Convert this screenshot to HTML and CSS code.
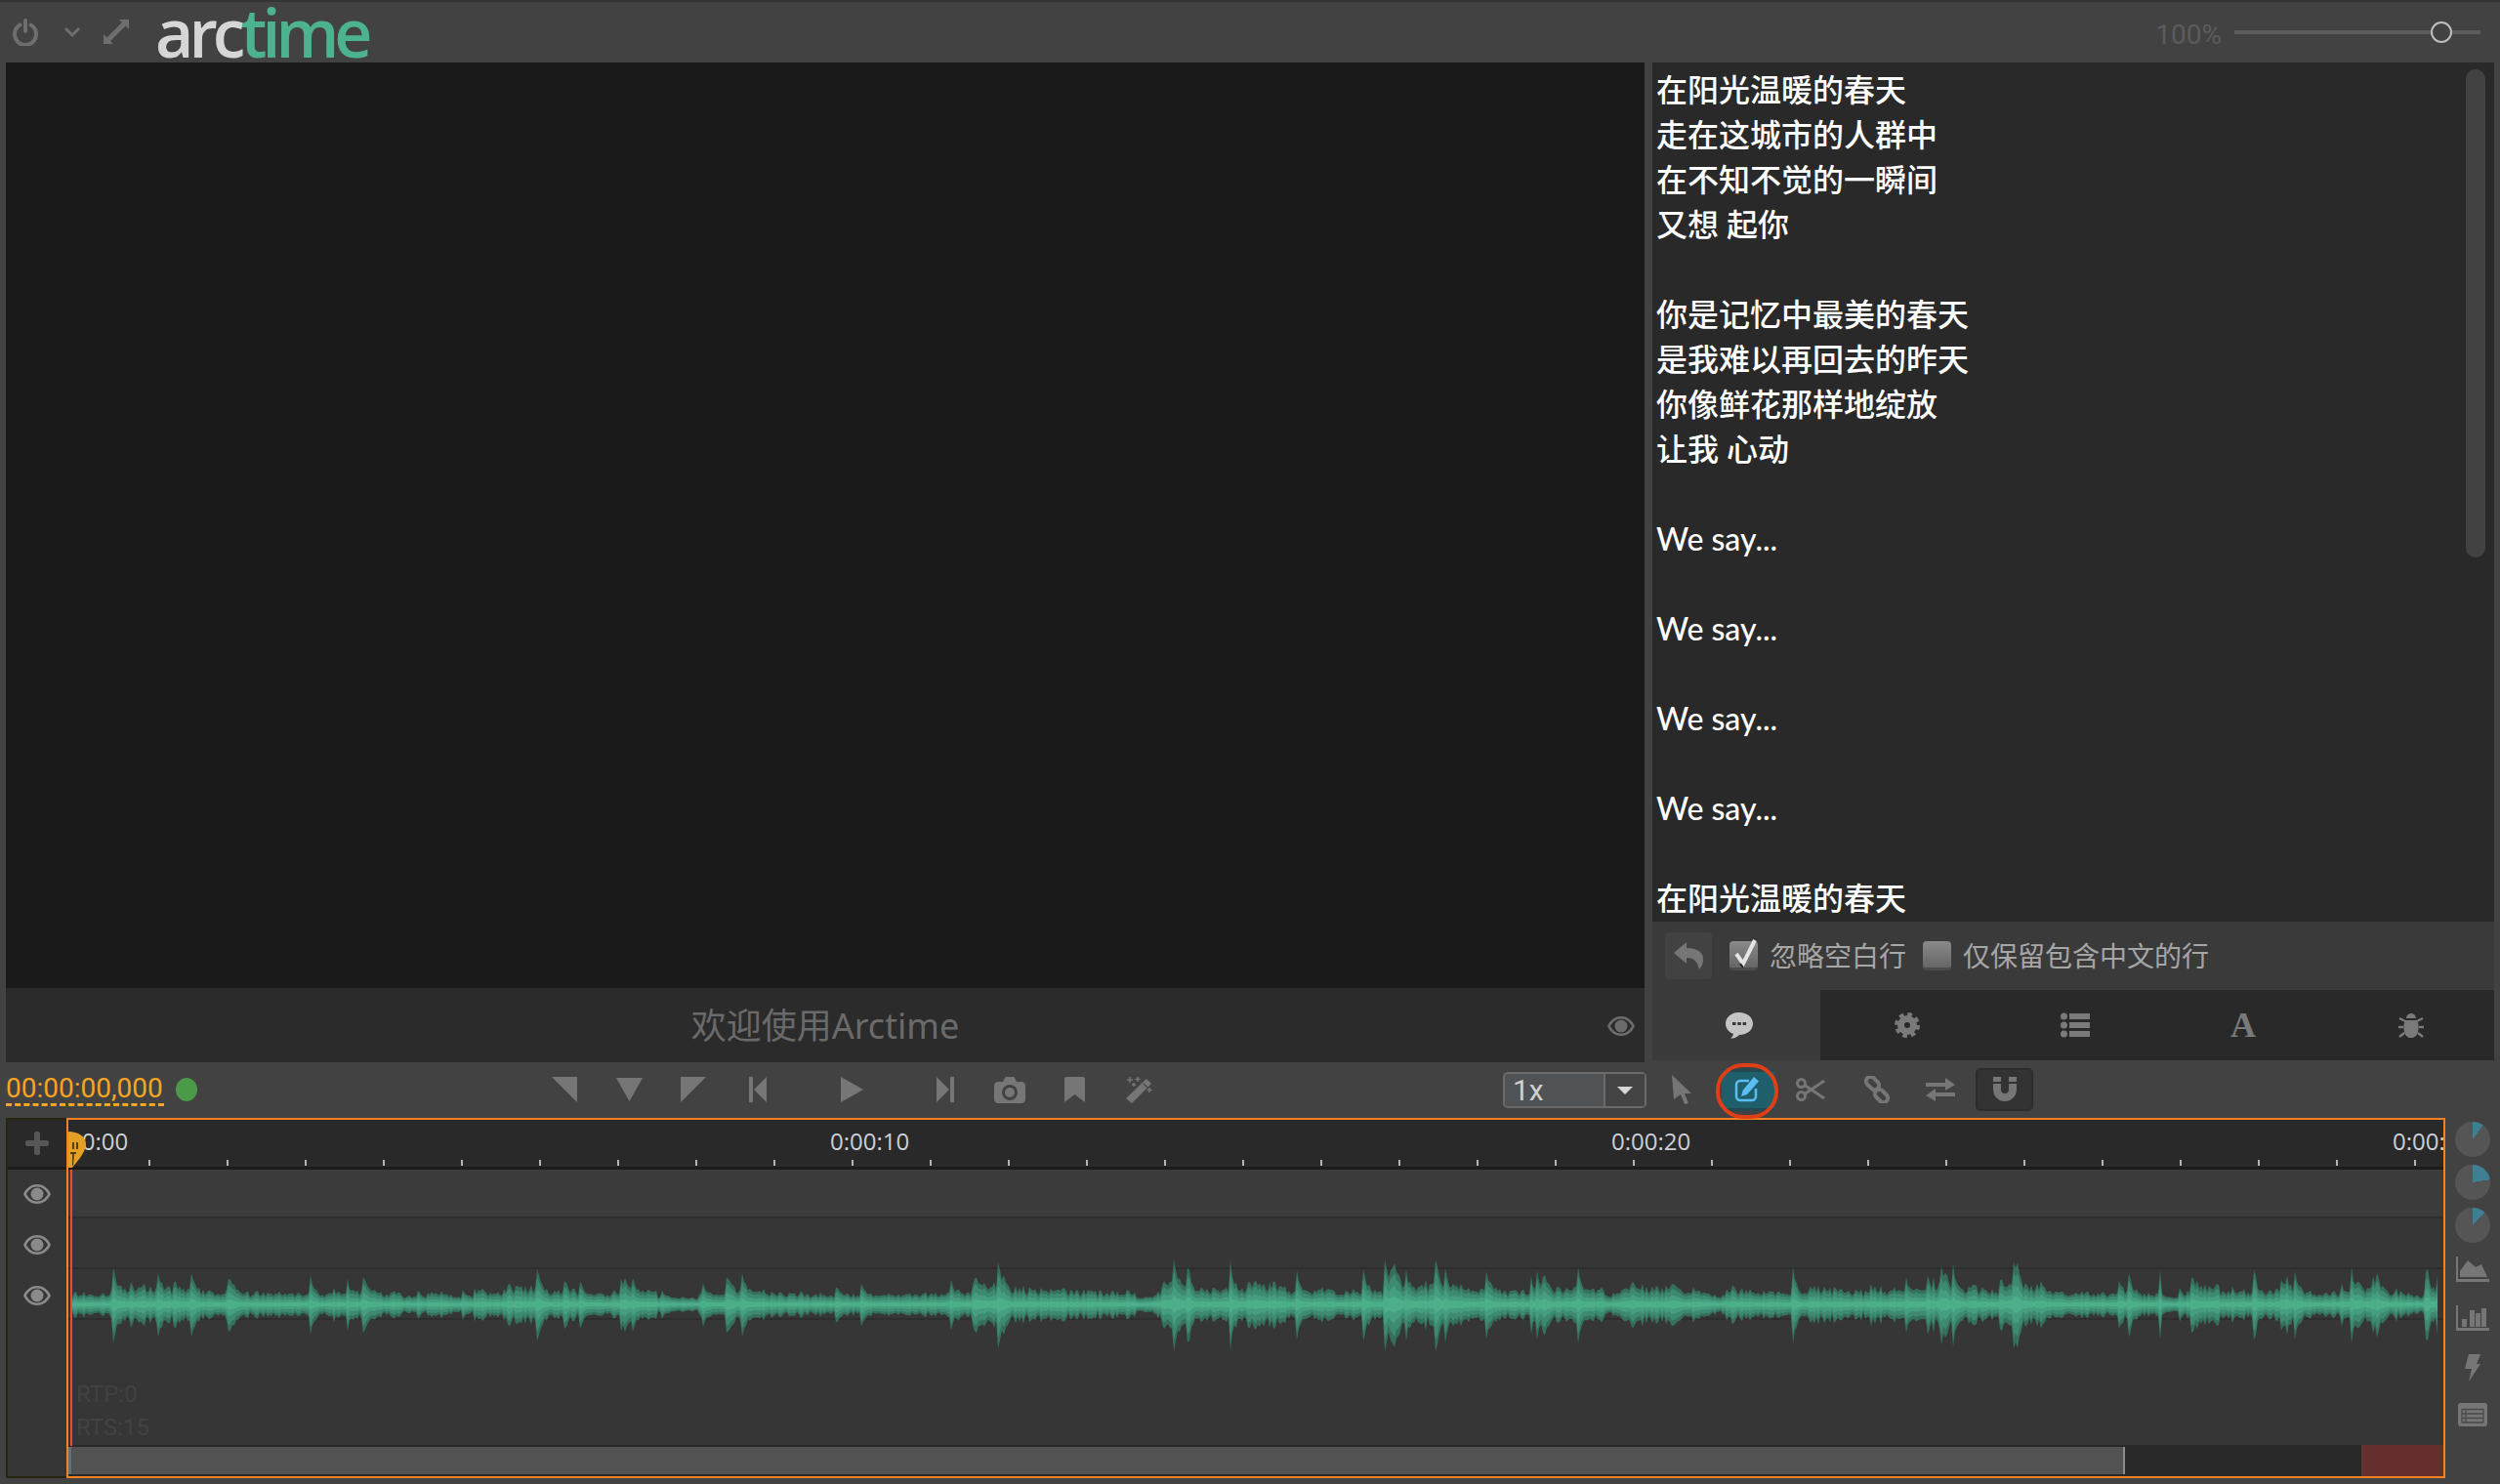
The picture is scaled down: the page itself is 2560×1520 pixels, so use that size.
FILE: index.html
```html
<!DOCTYPE html>
<html lang="zh-CN">
<head>
    <meta charset="UTF-8">
    <title>Arctime</title>
    <link rel="stylesheet" href="styles.css">
</head>
<body>
    <svg class="defs" width="0" height="0">
        <symbol id="eye" viewBox="0 0 30 22">
            <path fill-rule="evenodd" d="M15 1C8 1 3 6 1 11c2 5 7 10 14 10s12-5 14-10C27 6 22 1 15 1zm0 2.500c5 0 9 3.500 11 7.500-2 4-6 7.500-11 7.500S6 15 4 11c2-4 6-7.500 11-7.500z"/>
            <circle cx="15" cy="11" r="6.500"/>
        </symbol>
    </svg>

    <header class="top">
        <svg class="ic-power" width="26" height="28" viewBox="0 0 26 28"><path d="M7.500 6.500a11 11 0 1 0 11 0M13 2v11" fill="none" stroke="#6e6e6e" stroke-width="4" stroke-linecap="round"/></svg>
        <svg class="ic-chevron" width="18" height="12" viewBox="0 0 18 12"><path d="M2 2l7 7 7-7" fill="none" stroke="#6e6e6e" stroke-width="3"/></svg>
        <svg class="ic-expand" width="26" height="26" viewBox="0 0 26 26"><path d="M16 0h10v10l-3.500-3.500L7 22l3 3H0V15l3.500 3.500L19 3z" fill="#6e6e6e"/></svg>
        <div class="logo">arc<span class="logo-time">t<span class="logo-i">i</span>me</span></div>
        <div class="zoom-label">100%</div>
        <div class="zoom-track"><span class="zoom-knob"></span></div>
    </header>

    <main class="main">
        <section class="video-col">
            <div class="video"></div>
            <div class="caption">
                <span>欢迎使用Arctime</span>
                <svg class="caption-eye" width="30" height="22"><use href="#eye"/></svg>
            </div>
        </section>
        <section class="text-col">
            <div class="lyrics">
                <div class="scroll-thumb"></div>
                <p>在阳光温暖的春天</p>
                <p>走在这城市的人群中</p>
                <p>在不知不觉的一瞬间</p>
                <p>又想 起你</p>
                <p>&nbsp;</p>
                <p>你是记忆中最美的春天</p>
                <p>是我难以再回去的昨天</p>
                <p>你像鲜花那样地绽放</p>
                <p>让我 心动</p>
                <p>&nbsp;</p>
                <p>We say...</p>
                <p>&nbsp;</p>
                <p>We say...</p>
                <p>&nbsp;</p>
                <p>We say...</p>
                <p>&nbsp;</p>
                <p>We say...</p>
                <p>&nbsp;</p>
                <p>在阳光温暖的春天</p>
            </div>
            <div class="opts">
                <div class="undo">
                    <svg width="30" height="28" viewBox="0 0 30 28"><path d="M13 0L0 11l13 11v-6c7 0 11 3 13 12 3-3 4-7 4-11 0-7-6-11-17-11z" fill="#767676"/></svg>
                </div>
                <span class="check">
                    <svg width="30" height="36" viewBox="0 0 30 36"><path d="M7 17l7 10L26 3" fill="none" stroke="#e4e4e4" stroke-width="4"/><path d="M11 27l3 4" stroke="#222" stroke-width="2"/></svg>
                </span>
                <span class="opt-label">忽略空白行</span>
                <span class="check check-off"></span>
                <span class="opt-label">仅保留包含中文的行</span>
            </div>
            <nav class="tabs">
                <div class="tab tab-on">
                    <svg width="30" height="28" viewBox="0 0 30 28"><path fill-rule="evenodd" fill="#c4c4c4" d="M15 1C7 1 1 6 1 12.500c0 5 3.500 9 8 10.500-.5 2-1.500 3.500-3 4.500 4 0 7-1.500 9-3.500 8 0 14-5 14-11.500S23 1 15 1zM8 11h3.500v3H8zm5.300 0h3.500v3h-3.500zm5.300 0h3.500v3h-3.500z"/></svg>
                </div>
                <div class="tab">
                    <svg width="26" height="26" viewBox="0 0 26 26"><circle cx="13" cy="13" r="6.500" fill="none" stroke="#7a7a7a" stroke-width="7"/><circle cx="13" cy="13" r="11" fill="none" stroke="#7a7a7a" stroke-width="4" stroke-dasharray="4.640 4"/></svg>
                </div>
                <div class="tab">
                    <svg width="30" height="26" viewBox="0 0 30 26"><path d="M0 4a3.500 3.500 0 1 0 7 0a3.500 3.500 0 1 0-7 0M0 13a3.500 3.500 0 1 0 7 0a3.500 3.500 0 1 0-7 0M0 22a3.500 3.500 0 1 0 7 0a3.500 3.500 0 1 0-7 0M9 1h21v6H9zM9 10h21v6H9zM9 19h21v6H9z" fill="#7a7a7a"/></svg>
                </div>
                <div class="tab tab-a">A</div>
                <div class="tab">
                    <svg width="26" height="28" viewBox="0 0 26 28"><path d="M8 7a5 5 0 0 1 10 0zM7 9h12c2 4 2 8 1 12-1 4-4 6-7 6s-6-2-7-6c-1-4-1-8 1-12z" fill="#7a7a7a"/><path d="M7 10L1 7M19 10l6-3M5 16H0M21 16h5M6 22l-5 4M20 22l5 4" stroke="#7a7a7a" stroke-width="2.500" fill="none"/></svg>
                </div>
            </nav>
        </section>
    </main>

    <div class="toolbar">
        <div class="timecode">00:00:00,000</div>
        <span class="rec-dot"></span>
        <div class="transport">
            <div class="tool"><svg width="26" height="26" viewBox="0 0 26 26"><path d="M0 0h26v26z" fill="#767676"/></svg></div>
            <div class="tool"><svg width="27" height="24" viewBox="0 0 27 24"><path d="M0 0h27L13.500 24z" fill="#767676"/></svg></div>
            <div class="tool"><svg width="26" height="26" viewBox="0 0 26 26"><path d="M0 0h26L0 26z" fill="#767676"/></svg></div>
            <div class="tool"><svg width="18" height="26" viewBox="0 0 18 26"><path d="M0 0h4v26H0zM18 0v26L5 13z" fill="#767676"/></svg></div>
            <div class="tool tool-wide"><svg width="23" height="26" viewBox="0 0 23 26"><path d="M0 0l23 13L0 26z" fill="#767676"/></svg></div>
            <div class="tool"><svg width="18" height="26" viewBox="0 0 18 26"><path d="M14 0h4v26h-4zM0 0v26l13-13z" fill="#767676"/></svg></div>
            <div class="tool"><svg width="32" height="27" viewBox="0 0 32 27"><path fill-rule="evenodd" fill="#767676" d="M4 5h5l2-4c0-.6.500-1 1-1h8c.5 0 1 .4 1 1l2 4h5c2 0 4 2 4 4v14c0 2-2 4-4 4H4c-2 0-4-2-4-4V9c0-2 2-4 4-4zm12 3a8 8 0 1 0 0 16 8 8 0 0 0 0-16zm0 3a5 5 0 1 1 0 10 5 5 0 0 1 0-10z"/></svg></div>
            <div class="tool"><svg width="21" height="26" viewBox="0 0 21 26"><path d="M2 0h17c1 0 2 1 2 2v24l-10.500-8L0 26V2C0 1 1 0 2 0z" fill="#767676"/></svg></div>
            <div class="tool"><svg width="28" height="27" viewBox="0 0 28 27"><path d="M22 2l5 5L7 27l-6-5z" fill="#767676"/><path d="M19 7l4 4" stroke="#424242" stroke-width="1.500"/><path d="M5 0v6M2 3h6M13 0v5M10.500 2.500h5M25 11v5M22.500 13.500h5M9 6v4M7 8h4" stroke="#767676" stroke-width="1.500" fill="none"/></svg></div>
        </div>
        <div class="speed">
            <span class="speed-val">1x</span>
            <span class="speed-btn"></span>
        </div>
        <div class="tool tool-cursor"><svg width="20" height="30" viewBox="0 0 20 30"><path d="M0 0l20 19h-7l4 10-4 1-4-10-7 5z" fill="#767676"/></svg></div>
        <div class="edit-btn">
            <svg width="26" height="26" viewBox="0 0 26 26"><path d="M15 4H6a4 4 0 0 0-4 4v12a4 4 0 0 0 4 4h12a4 4 0 0 0 4-4v-8" fill="none" stroke="#5cbdf2" stroke-width="2.500"/><path d="M20 0l5 4.500L13 18l-6 2 1.500-6z" fill="#5cbdf2"/></svg>
        </div>
        <div class="tool tool-cut"><svg width="30" height="24" viewBox="0 0 30 24"><g fill="none" stroke="#767676" stroke-width="3"><circle cx="5.500" cy="5.500" r="4"/><circle cx="5.500" cy="18.500" r="4"/><path d="M9 7.500L29 21M9 16.500L29 3"/></g></svg></div>
        <div class="tool tool-link"><svg width="28" height="28" viewBox="0 0 28 28"><g fill="none" stroke="#767676" stroke-width="4"><rect x="2" y="3" width="15" height="9" rx="4.500" transform="rotate(45 9.500 7.500)"/><rect x="11" y="16" width="15" height="9" rx="4.500" transform="rotate(45 18.500 20.500)"/></g></svg></div>
        <div class="tool tool-swap"><svg width="30" height="24" viewBox="0 0 30 24"><path d="M0 5h20V0l10 7-10 6V9H0zM30 15H10v-4L0 18l10 6v-5h20z" fill="#767676"/></svg></div>
        <div class="magnet-btn">
            <svg width="24" height="26" viewBox="0 0 24 26"><path d="M0 0h8v13a4 4 0 0 0 8 0V0h8v13a12 12 0 0 1-24 0z" fill="#767676"/><path d="M0 6h8M16 6h8" stroke="#333" stroke-width="2"/></svg>
        </div>
    </div>

    <div class="timeline">
        <div class="heads">
            <div class="head head-add">
                <svg width="24" height="24" viewBox="0 0 24 24"><path d="M9 2c0-1 1-2 2-2h2c1 0 2 1 2 2v7h7c1 0 2 1 2 2v2c0 1-1 2-2 2h-7v7c0 1-1 2-2 2h-2c-1 0-2-1-2-2v-7H2c-1 0-2-1-2-2v-2c0-1 1-2 2-2h7z" fill="#565656"/></svg>
            </div>
            <div class="head"><svg class="track-eye" width="30" height="22"><use href="#eye"/></svg></div>
            <div class="head"><svg class="track-eye" width="30" height="22"><use href="#eye"/></svg></div>
            <div class="head"><svg class="track-eye" width="30" height="22"><use href="#eye"/></svg></div>
        </div>
        <div class="canvas">
            <div class="ruler">
                <div class="ruler-labels">
                    <span>0:00:00</span>
                    <span>0:00:10</span>
                    <span>0:00:20</span>
                    <span>0:00:30</span>
                </div>
                <div class="ticks"></div>
            </div>
            <div class="track track-first"></div>
            <div class="track"></div>
            <div class="track"></div>
            <div class="track-rest"></div>
            <div class="scrollbar">
                <div class="scroll-view"></div>
                <div class="scroll-end"></div>
            </div>
            <svg id="wave" class="wave" width="2430" height="130"></svg>
            <div class="stats">RTP:0<br>RTS:15</div>
            <div class="playline"></div>
            <div class="handle">
                <svg width="18" height="37" viewBox="0 0 18 37"><path d="M0 0c10 0 18 5 18 13S8 32 4 37H0z" fill="#e3a024"/><path d="M4 11h2v7H4zM8 11h2v7H8zM2 21h6v2H6l-1 12h-1L4 23H2z" fill="#55400f"/></svg>
            </div>
        </div>
        <aside class="rail">
            <span class="pie pie-a"></span>
            <span class="pie pie-b"></span>
            <span class="pie pie-c"></span>
            <svg class="rail-chart" width="34" height="26" viewBox="0 0 34 26"><path d="M0 0h2v23h32v3H0z" fill="#767676"/><path d="M4 21V15l8-11 8 7 6-3 6 13z" fill="#767676"/></svg>
            <svg class="rail-bars" width="34" height="26" viewBox="0 0 34 26"><path d="M0 0h2v23h32v3H0zM6 14h5v8H6zM14 5h5v17h-5zM20 8h5v14h-5zM26 3h5v19h-5z" fill="#767676"/></svg>
            <svg class="rail-bolt" width="16" height="28" viewBox="0 0 16 28"><path d="M4 0h12l-4 10h4L4 28l3-13H0z" fill="#767676"/></svg>
            <svg class="rail-table" width="30" height="24" viewBox="0 0 30 24"><rect width="30" height="24" rx="3" fill="#767676"/><path d="M4 6.500h22M4 11h22M4 15.500h22M4 20h22M4 6v14M8 6v14M26 6v14" stroke="#4a4a4a" stroke-width="1.300" fill="none"/></svg>
        </aside>
    </div>

    <script src="waveform.js"></script>
</body>
</html>
```

FILE: styles.css
```css
* {
    box-sizing: border-box;
}
html, body {
    margin: 0;
    height: 100%;
}
body {
    width: 2560px;
    height: 1520px;
    overflow: hidden;
    background: #424242;
    font-family: "Open Sans", "Noto Sans CJK SC", sans-serif;
}
.defs {
    display: block;
    height: 0;
}
p {
    margin: 0;
}

/* top bar */
.top {
    height: 64px;
    border-top: 2px solid #333;
    display: flex;
    align-items: center;
    padding-left: 13px;
    position: relative;
}
.ic-chevron {
    margin-left: 26px;
}
.ic-expand {
    margin-left: 23px;
}
.logo {
    margin-left: 27px;
    font-family: "Open Sans", sans-serif;
    font-weight: 600;
    font-size: 68px;
    line-height: 62px;
    letter-spacing: -5px;
    color: #d6d6d6;
}
.logo-time {
    color: #4db38e;
}
.logo-i {
    position: relative;
}
.logo-i::before {
    content: "";
    position: absolute;
    left: 4px;
    top: -2px;
    width: 11px;
    height: 11px;
    border-radius: 50%;
    background: #a5c639;
    box-shadow: 0 0 0 3px #424242;
}
.zoom-label {
    margin-left: auto;
    font-family: Roboto, sans-serif;
    font-size: 28px;
    color: #5c5c5c;
    margin-top: 4px;
}
.zoom-track {
    margin-left: 13px;
    margin-right: 20px;
    width: 252px;
    height: 4px;
    background: #5c5c5c;
    position: relative;
}
.zoom-knob {
    position: absolute;
    left: 201px;
    top: -9px;
    width: 22px;
    height: 22px;
    border: 2px solid #bdbdbd;
    border-radius: 50%;
    background: #424242;
}

/* video and text */
.main {
    display: flex;
    height: 1024px;
    padding-left: 6px;
}
.video-col {
    width: 1678px;
    display: flex;
    flex-direction: column;
}
.video {
    height: 948px;
    background: #1a1a1a;
}
.caption {
    flex: 1;
    background: #2b2b2b;
    display: flex;
    align-items: center;
    justify-content: center;
    position: relative;
    font-family: "Noto Sans", "Noto Sans CJK SC", sans-serif;
    font-size: 36px;
    color: #6a6a6a;
    padding-bottom: 4px;
}
.caption-eye {
    position: absolute;
    right: 9px;
    top: 28px;
    fill: #6c6c6c;
}
.text-col {
    width: 862px;
    margin-left: 8px;
    display: flex;
    flex-direction: column;
}
.lyrics {
    height: 880px;
    padding: 5px 0 0 4px;
    background: #292929;
    color: #fff;
    font-family: Lato, "Noto Sans CJK SC", sans-serif;
    font-weight: 500;
    font-size: 32px;
    line-height: 46px;
    overflow: hidden;
    position: relative;
}
.scroll-thumb {
    position: absolute;
    right: 9px;
    top: 7px;
    width: 20px;
    height: 500px;
    border-radius: 10px;
    background: #424242;
}
.opts {
    height: 70px;
    background: #3a3a3a;
    display: flex;
    align-items: center;
    padding-left: 13px;
    font-family: "Noto Sans CJK SC", sans-serif;
    font-size: 28px;
    color: #a6a6a6;
}
.undo {
    width: 48px;
    height: 48px;
    background: #424242;
    border-radius: 4px;
    display: flex;
    align-items: center;
    justify-content: center;
}
.check {
    width: 29px;
    height: 30px;
    margin-left: 18px;
    border-radius: 4px;
    background: linear-gradient(#8a8a8a, #666);
    border-bottom: 3px solid #4c4c4c;
    position: relative;
}
.check svg {
    position: absolute;
    left: 0;
    top: -4px;
}
.check-off {
    margin-left: 17px;
}
.opt-label {
    margin-left: 12px;
    line-height: 40px;
    padding-bottom: 2px;
}
.tabs {
    flex: 1;
    display: flex;
    margin-bottom: 2px;
    background: #292929;
}
.tab {
    width: 172px;
    padding-left: 6px;
    display: flex;
    align-items: center;
    justify-content: center;
}
.tab-on {
    background: #3a3a3a;
}
.tab-a {
    font-family: "Liberation Serif", serif;
    font-weight: bold;
    font-size: 36px;
    color: #7a7a7a;
}

/* toolbar */
.toolbar {
    height: 56px;
    display: flex;
    align-items: center;
    padding-left: 6px;
    position: relative;
    z-index: 2;
}
.timecode {
    width: 162px;
    margin-top: 1px;
    font-family: Roboto, sans-serif;
    font-size: 28px;
    line-height: 30px;
    color: #f5a623;
    border-bottom: 3px dashed #f5a623;
    white-space: nowrap;
}
.rec-dot {
    width: 22px;
    height: 24px;
    margin-left: 12px;
    border-radius: 50%;
    background: #4a9a48;
}
.transport {
    display: flex;
    margin-left: 343px;
}
.tool {
    width: 66px;
    height: 40px;
    display: flex;
    align-items: center;
    justify-content: center;
}
.tool-wide {
    width: 126px;
}
.speed {
    width: 147px;
    height: 37px;
    margin-left: 340px;
    display: flex;
    border: 2px solid #6a6a6a;
    border-radius: 5px;
    background: #4f5355;
}
.speed-val {
    width: 101px;
    padding-left: 8px;
    font-family: Roboto, sans-serif;
    font-size: 30px;
    line-height: 33px;
    color: #d0d0d0;
}
.speed-btn {
    flex: 1;
    border-left: 2px solid #6a6a6a;
    background: #444;
    position: relative;
}
.speed-btn::after {
    content: "";
    position: absolute;
    left: 12px;
    top: 13px;
    border-left: 8px solid transparent;
    border-right: 8px solid transparent;
    border-top: 8px solid #d8d8d8;
}
.tool-cursor {
    width: 72px;
}
.edit-btn {
    width: 54px;
    height: 43px;
    margin-left: 5px;
    margin-right: 4px;
    padding-right: 3px;
    background: #1f5f6b;
    border-top: 3px solid #244950;
    border-bottom: 3px solid #244950;
    display: flex;
    align-items: center;
    justify-content: center;
    position: relative;
}
.edit-btn::after {
    content: "";
    position: absolute;
    left: -6px;
    right: -4px;
    top: -9px;
    bottom: -11px;
    border: 4px solid #e03e17;
    border-radius: 28px;
}
.tool-link {
    width: 70px;
}
.tool-swap {
    width: 60px;
}
.magnet-btn {
    width: 59px;
    height: 44px;
    margin-left: 6px;
    background: #333;
    border: 2px solid #2d2d2d;
    border-radius: 5px;
    display: flex;
    align-items: center;
    justify-content: center;
}

/* timeline */
.timeline {
    display: flex;
    height: 370px;
    margin-top: 1px;
    padding-left: 6px;
}
.heads {
    width: 62px;
    height: 369px;
    background: #363636;
    border-left: 2px solid #262612;
    border-bottom: 2px solid #262612;
    border-top: 2px solid #262612;
}
.head {
    height: 52px;
    padding-bottom: 3px;
    display: flex;
    align-items: center;
    justify-content: center;
}
.head-add {
    height: 51px;
    padding-bottom: 0;
    background: #292929;
    border-bottom: 3px solid #1c1c1c;
}
.track-eye {
    fill: #8a8a8a;
}
.canvas {
    width: 2436px;
    height: 369px;
    border: 2px solid #f58220;
    display: flex;
    flex-direction: column;
    position: relative;
    overflow: hidden;
}
.ruler {
    height: 51px;
    flex: none;
    background: #292929;
    border-bottom: 3px solid #1c1c1c;
    overflow: hidden;
}
.ruler-labels {
    display: flex;
    height: 41px;
    margin-left: -20px;
    font-family: "Open Sans", sans-serif;
    font-size: 24px;
    line-height: 44px;
    color: #ccd0d8;
}
.ruler-labels span {
    flex: none;
    width: 800px;
}
.ticks {
    height: 6px;
    background: repeating-linear-gradient(90deg, transparent 0 2px, #b4b4b4 2px 4px, transparent 4px 80px);
}
.track {
    height: 52px;
    flex: none;
    background: #363636;
    border-bottom: 2px solid #2e2e2e;
}
.track-first {
    height: 50px;
    background: #3b3b3b;
}
.track-rest {
    flex: 1;
    background: #363636;
}
.scrollbar {
    height: 32px;
    flex: none;
    display: flex;
    background: #292929;
}
.scroll-view {
    width: 2106px;
    margin: 2px 0;
    background: #525252;
    border-right: 2px solid #8c8c8c;
    border-left: 3px solid #5f7078;
}
.scroll-end {
    width: 84px;
    margin-left: auto;
    background: #663030;
}
.wave {
    position: absolute;
    left: 4px;
    top: 124px;
}
.stats {
    position: absolute;
    left: 8px;
    top: 264px;
    font-family: Roboto, sans-serif;
    font-size: 24px;
    line-height: 34px;
    color: #424242;
}
.playline {
    position: absolute;
    left: 2px;
    top: 51px;
    width: 2px;
    height: 283px;
    background: #f0501e;
}
.handle {
    position: absolute;
    left: 0;
    top: 12px;
    line-height: 0;
}
.rail {
    width: 56px;
    display: flex;
    flex-direction: column;
    align-items: center;
    padding-top: 4px;
}
.pie {
    width: 36px;
    height: 36px;
    margin-bottom: 8px;
    border-radius: 50%;
    flex: none;
}
.pie-a {
    background: conic-gradient(#3f7f94 0 36deg, #555 36deg);
}
.pie-b {
    background: conic-gradient(#3f7f94 0 81deg, #555 81deg);
}
.pie-c {
    background: conic-gradient(#3f7f94 0 44deg, #555 44deg);
}
.rail-chart {
    margin-top: 6px;
}
.rail-bars {
    margin-top: 24px;
}
.rail-bolt {
    margin-top: 24px;
}
.rail-table {
    margin-top: 22px;
}
```

FILE: waveform.js
```js
// draws the audio track as mirrored envelopes, same picture every load
var svg = document.getElementById("wave");
var mid = 65, width = 2424;
var seed = 12345;

function rnd() {
    seed = (seed * 16807) % 2147483647;
    return seed / 2147483647;
}

// louder through the middle of the clip
function loudness(x) {
    if (x < 860) return 0.8;
    if (x < 1700) return 1;
    return 0.9;
}

var peaks = [];
var body = 8, spike = 0, quiet = 0;
for (var x = 0; x < width; x += 2) {
    if (rnd() < 0.03) body = 8 + rnd() * 14;
    if (rnd() < 0.05) spike = 20 + rnd() * 28;
    if (rnd() < 0.006) quiet = 14;
    body += (6 - body) * 0.03;
    spike *= 0.6;
    quiet = quiet > 0 ? quiet - 1 : 0;
    var a = body * (0.4 + rnd() * 0.75) + spike + rnd() * 3;
    if (quiet > 0) a *= 0.4;
    peaks.push(Math.min(4 + a * loudness(x), 46));
}

function band(scale, fill) {
    var top = "", bottom = "";
    for (var i = 0; i < peaks.length; i++) {
        top += (i * 2) + "," + (mid - peaks[i] * scale).toFixed(1) + " ";
        bottom = (i * 2) + "," + (mid + peaks[i] * scale * 1.05).toFixed(1) + " " + bottom;
    }
    var p = document.createElementNS("http://www.w3.org/2000/svg", "polygon");
    p.setAttribute("points", top + bottom);
    p.setAttribute("fill", fill);
    svg.appendChild(p);
}

band(1, "#35705c");
band(0.75, "#3d8a70");
band(0.45, "#459e7f");
band(0.2, "#4caf8a");
```
